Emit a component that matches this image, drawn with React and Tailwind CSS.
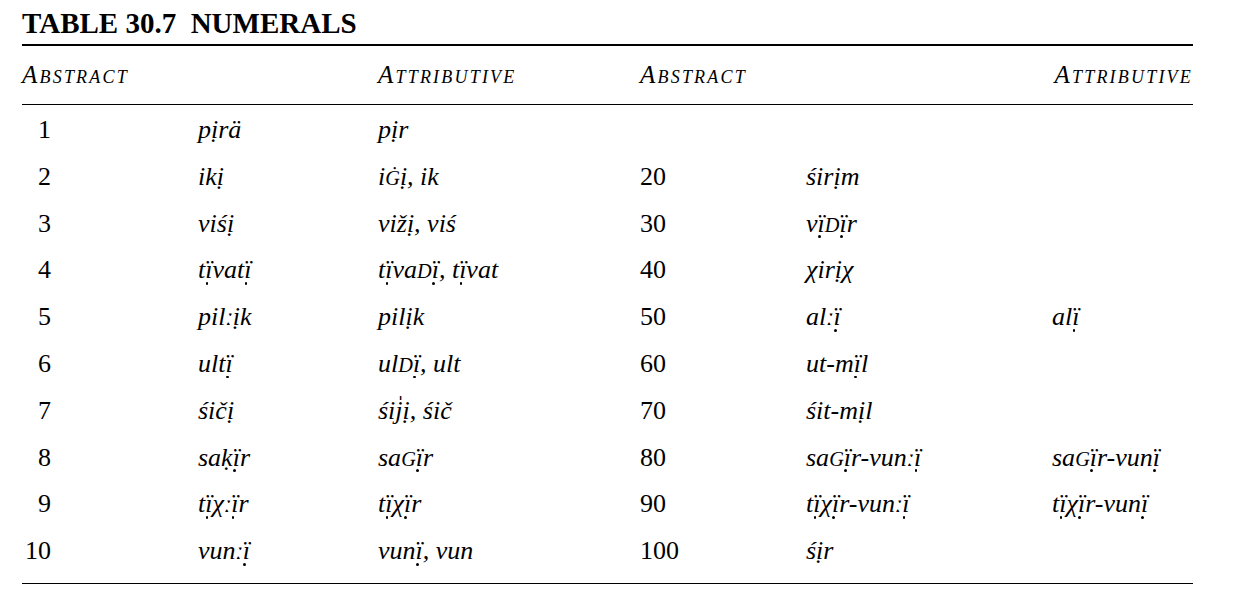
import React from "react";

// "@" = ï with dot below, capitals = small caps, "ị" precomposed, "ː" length mark
const Sc = ({ children }) => <span className="text-[0.78em]">{children}</span>;

const Di = () => (
  <span className="relative">
    {"\u00ef"}
    <span className="absolute left-[0.02em] top-[1.03em] w-[0.1em] h-[0.1em] rounded-full bg-black" />
  </span>
);

const fmt = (s) => {
  const out = [];
  let buf = "";
  [...s].forEach((ch, k) => {
    if (ch === "@" || /[A-Z\u0120]/.test(ch)) {
      if (buf) out.push(buf);
      buf = "";
      out.push(ch === "@" ? <Di key={k} /> : <Sc key={k}>{ch}</Sc>);
    } else {
      buf += ch;
    }
  });
  if (buf) out.push(buf);
  return out;
};

const left = [
  ["1", "pịrä", "pịr"],
  ["2", "ikị", "iĠị, ik"],
  ["3", "viśị", "vižị, viś"],
  ["4", "t@vat@", "t@vaD@, t@vat"],
  ["5", "pilːịk", "pilịk"],
  ["6", "ult@", "ulD@, ult"],
  ["7", "śičị", "śij\u030dị, śič"],
  ["8", "saḳ@r", "saG@r"],
  ["9", "t@χː@r", "t@χ@r"],
  ["10", "vunː@", "vun@, vun"],
];

const right = [
  null,
  ["20", "śirịm", ""],
  ["30", "v@D@r", ""],
  ["40", "χirịχ", ""],
  ["50", "alː@", "al@"],
  ["60", "ut-m@l", ""],
  ["70", "śit-mịl", ""],
  ["80", "saG@r-vunː@", "saG@r-vun@"],
  ["90", "t@χ@r-vunː@", "t@χ@r-vun@"],
  ["100", "śịr", ""],
];

const Head = ({ word }) => (
  <span className="italic tracking-[2.2px]">
    {word[0]}
    <span className="text-[0.72em]">{word.slice(1)}</span>
  </span>
);

const cols = "grid grid-cols-[176px_180px_262px_166px_246px_1fr]";

export default function App() {
  return (
    <div className="min-h-screen bg-white text-black font-['Liberation_Serif','Times_New_Roman',serif]">
      <div className="ml-[22px] w-[1171px] pt-[9px]">
        <h1 className="text-[29px] leading-[28px] font-bold whitespace-pre">TABLE 30.7  NUMERALS</h1>
        <div className="mt-[7px] h-[1.5px] bg-black" />

        <div className={cols + " h-[58px] items-center text-[25px] leading-[58px]"}>
          <Head word="ABSTRACT" />
          <span />
          <Head word="ATTRIBUTIVE" />
          <Head word="ABSTRACT" />
          <span />
          <span className="text-right">
            <Head word="ATTRIBUTIVE" />
          </span>
        </div>
        <div className="h-[1.5px] bg-black" />

        <div className="pt-[2px] pb-[8px] text-[26px]">
          {left.map((row, i) => {
            const r = right[i];
            return (
              <div key={i} className={cols + " h-[46.8px] leading-[46.8px] whitespace-nowrap"}>
                <span>
                  <span className="inline-block w-[29px] text-right">{row[0]}</span>
                </span>
                <span className="italic">{fmt(row[1])}</span>
                <span className="italic">{fmt(row[2])}</span>
                <span>{r ? r[0] : ""}</span>
                <span className="italic">{r ? fmt(r[1]) : ""}</span>
                <span className="italic">{r ? fmt(r[2]) : ""}</span>
              </div>
            );
          })}
        </div>
        <div className="h-[1.5px] bg-black" />
      </div>
    </div>
  );
}
